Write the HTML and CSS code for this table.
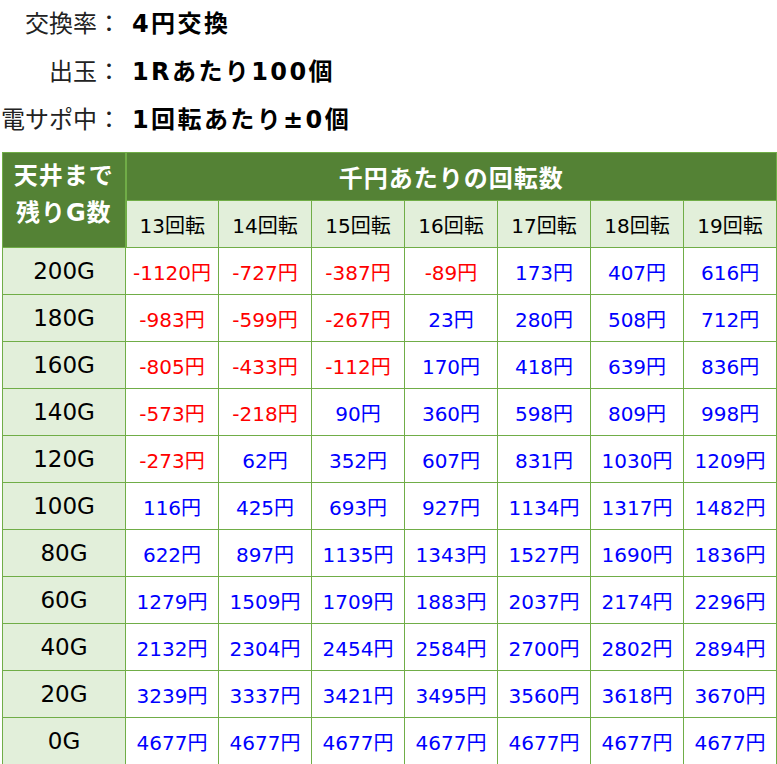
FILE: index.html
```html
<!DOCTYPE html>
<html lang="ja">
<head>
<meta charset="utf-8">
<link rel="stylesheet" href="styles.css">
</head>
<body>
<div class="spec">
  <div class="spec-row"><span class="spec-label">交換率：</span><span class="spec-value">4円交換</span></div>
  <div class="spec-row"><span class="spec-label">出玉：</span><span class="spec-value">1Rあたり100個</span></div>
  <div class="spec-row"><span class="spec-label">電サポ中：</span><span class="spec-value">1回転あたり±0個</span></div>
</div>
<table class="border-table">
  <colgroup>
    <col class="c-first">
    <col span="7" class="c-data">
  </colgroup>
  <thead>
    <tr class="h1">
      <th rowspan="2" class="corner">天井まで<br>残りG数</th>
      <th colspan="7" class="title">千円あたりの回転数</th>
    </tr>
    <tr class="h2">
      <th>13回転</th><th>14回転</th><th>15回転</th><th>16回転</th><th>17回転</th><th>18回転</th><th>19回転</th>
    </tr>
  </thead>
  <tbody>
    <tr><th>200G</th><td class="neg">-1120円</td><td class="neg">-727円</td><td class="neg">-387円</td><td class="neg">-89円</td><td class="pos">173円</td><td class="pos">407円</td><td class="pos">616円</td></tr>
    <tr><th>180G</th><td class="neg">-983円</td><td class="neg">-599円</td><td class="neg">-267円</td><td class="pos">23円</td><td class="pos">280円</td><td class="pos">508円</td><td class="pos">712円</td></tr>
    <tr><th>160G</th><td class="neg">-805円</td><td class="neg">-433円</td><td class="neg">-112円</td><td class="pos">170円</td><td class="pos">418円</td><td class="pos">639円</td><td class="pos">836円</td></tr>
    <tr><th>140G</th><td class="neg">-573円</td><td class="neg">-218円</td><td class="pos">90円</td><td class="pos">360円</td><td class="pos">598円</td><td class="pos">809円</td><td class="pos">998円</td></tr>
    <tr><th>120G</th><td class="neg">-273円</td><td class="pos">62円</td><td class="pos">352円</td><td class="pos">607円</td><td class="pos">831円</td><td class="pos">1030円</td><td class="pos">1209円</td></tr>
    <tr><th>100G</th><td class="pos">116円</td><td class="pos">425円</td><td class="pos">693円</td><td class="pos">927円</td><td class="pos">1134円</td><td class="pos">1317円</td><td class="pos">1482円</td></tr>
    <tr><th>80G</th><td class="pos">622円</td><td class="pos">897円</td><td class="pos">1135円</td><td class="pos">1343円</td><td class="pos">1527円</td><td class="pos">1690円</td><td class="pos">1836円</td></tr>
    <tr><th>60G</th><td class="pos">1279円</td><td class="pos">1509円</td><td class="pos">1709円</td><td class="pos">1883円</td><td class="pos">2037円</td><td class="pos">2174円</td><td class="pos">2296円</td></tr>
    <tr><th>40G</th><td class="pos">2132円</td><td class="pos">2304円</td><td class="pos">2454円</td><td class="pos">2584円</td><td class="pos">2700円</td><td class="pos">2802円</td><td class="pos">2894円</td></tr>
    <tr><th>20G</th><td class="pos">3239円</td><td class="pos">3337円</td><td class="pos">3421円</td><td class="pos">3495円</td><td class="pos">3560円</td><td class="pos">3618円</td><td class="pos">3670円</td></tr>
    <tr><th>0G</th><td class="pos">4677円</td><td class="pos">4677円</td><td class="pos">4677円</td><td class="pos">4677円</td><td class="pos">4677円</td><td class="pos">4677円</td><td class="pos">4677円</td></tr>
  </tbody>
</table>
</body>
</html>
```
FILE: styles.css
```css
html, body {
  margin: 0;
  padding: 0;
  background: #ffffff;
}
body {
  font-family: "DejaVu Sans", "Noto Sans CJK JP", sans-serif;
  color: #000000;
}
.spec {
  display: flex;
  flex-direction: column;
}
.spec-row {
  display: flex;
  align-items: center;
  height: 48px;
  font-size: 24px;
  line-height: 48px;
}
.spec-label {
  width: 121px;
  text-align: right;
  color: #222222;
}
.spec-value {
  margin-left: 11px;
  font-weight: bold;
  letter-spacing: 2.4px;
}
.border-table {
  margin: 8px 0 0 2px;
  border-collapse: collapse;
  table-layout: fixed;
  width: 775px;
  font-size: 20px;
}
.c-first { width: 123px; }
.c-data { width: 93px; }
.border-table th,
.border-table td {
  border: 1px solid #70ad47;
  text-align: center;
  padding: 0;
  height: 46px;
  font-weight: normal;
}
.border-table th.corner {
  background: #548235;
  color: #ffffff;
  font-weight: bold;
  font-size: 24px;
  line-height: 37px;
  letter-spacing: 1px;
  border-right-width: 2px;
  padding-bottom: 10px;
}
.border-table th.title {
  background: #548235;
  color: #ffffff;
  font-weight: bold;
  font-size: 24px;
  letter-spacing: 1px;
  padding-bottom: 1px;
}
.h2 th {
  background: #e2efda;
}
tbody th {
  background: #e2efda;
  border-right-width: 2px;
  padding-bottom: 4px;
  font-size: 23px;
}
tbody td {
  padding-top: 4px;
}
.neg { color: #ff0000; }
.pos { color: #0000ff; }
```
